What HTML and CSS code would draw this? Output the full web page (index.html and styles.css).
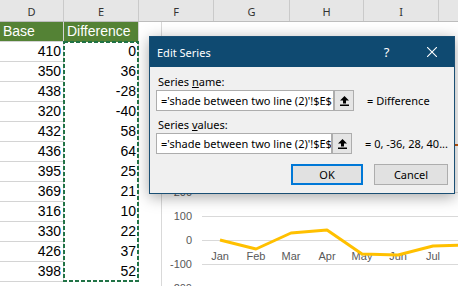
FILE: index.html
```html
<!DOCTYPE html>
<html lang="en">
<head>
    <meta charset="UTF-8">
    <meta name="viewport" content="width=device-width, initial-scale=1.0">
    <title>Edit Series</title>
    <link rel="stylesheet" href="styles.css">
</head>
<body>
    <div class="sheet">
        <div class="col-heads">
            <div class="col-head col-d">D</div>
            <div class="col-head col-e">E</div>
            <div class="col-head col-f">F</div>
            <div class="col-head col-g">G</div>
            <div class="col-head col-h">H</div>
            <div class="col-head col-i">I</div>
            <div class="col-head col-j"></div>
        </div>

        <div class="row">
            <div class="cell col-d title-cell">Base</div>
            <div class="cell col-e title-cell">Difference</div>
        </div>
        <div class="row"><div class="cell col-d">410</div><div class="cell col-e">0</div></div>
        <div class="row"><div class="cell col-d">350</div><div class="cell col-e">36</div></div>
        <div class="row"><div class="cell col-d">438</div><div class="cell col-e">-28</div></div>
        <div class="row"><div class="cell col-d">320</div><div class="cell col-e">-40</div></div>
        <div class="row"><div class="cell col-d">432</div><div class="cell col-e">58</div></div>
        <div class="row"><div class="cell col-d">436</div><div class="cell col-e">64</div></div>
        <div class="row"><div class="cell col-d">395</div><div class="cell col-e">25</div></div>
        <div class="row"><div class="cell col-d">369</div><div class="cell col-e">21</div></div>
        <div class="row"><div class="cell col-d">316</div><div class="cell col-e">10</div></div>
        <div class="row"><div class="cell col-d">330</div><div class="cell col-e">22</div></div>
        <div class="row"><div class="cell col-d">426</div><div class="cell col-e">37</div></div>
        <div class="row"><div class="cell col-d">398</div><div class="cell col-e">52</div></div>

        <!-- copy marquee around E2:E13 -->
        <svg class="marquee" width="76" height="241">
            <rect x="1" y="1" width="74" height="239" fill="none" stroke="#217346" stroke-width="2" stroke-dasharray="4 2"/>
        </svg>

        <!-- chart sitting on the sheet, drawn in page coordinates -->
        <div class="chart">
            <svg width="319" height="264" viewBox="139 22 319 264">
                <line class="axis" x1="161.5" y1="22" x2="161.5" y2="286"/>
                <line class="grid" x1="202" y1="192.5" x2="458" y2="192.5"/>
                <line class="grid" x1="202" y1="216.5" x2="458" y2="216.5"/>
                <line class="grid" x1="202" y1="240.5" x2="458" y2="240.5"/>
                <line class="grid" x1="202" y1="264.5" x2="458" y2="264.5"/>
                <text class="tick" x="192" y="196" text-anchor="end">200</text>
                <text class="tick" x="192" y="220" text-anchor="end">100</text>
                <text class="tick" x="192" y="244" text-anchor="end">0</text>
                <text class="tick" x="192" y="268" text-anchor="end">-100</text>
                <text class="tick" x="192" y="292" text-anchor="end">-200</text>
                <text class="tick" x="220" y="260" text-anchor="middle">Jan</text>
                <text class="tick" x="256" y="260" text-anchor="middle">Feb</text>
                <text class="tick" x="291" y="260" text-anchor="middle">Mar</text>
                <text class="tick" x="327" y="260" text-anchor="middle">Apr</text>
                <text class="tick" x="362" y="260" text-anchor="middle">May</text>
                <text class="tick" x="398" y="260" text-anchor="middle">Jun</text>
                <text class="tick" x="433" y="260" text-anchor="middle">Jul</text>
                <line x1="452" y1="145" x2="458" y2="145" stroke="#c55a11" stroke-width="2"/>
                <polyline class="series" points="220,240 256,249 291,233 327,230 362,254 398,255 433,246 469,245"/>
            </svg>
        </div>
    </div>

    <div class="dialog">
        <div class="dialog-title">
            <span class="dialog-name">Edit Series</span>
            <span class="title-btn">?</span>
            <span class="title-btn">
                <svg width="10" height="10" viewBox="0 0 10 10">
                    <path d="M0 0 L10 10 M10 0 L0 10" stroke="#fff" stroke-width="1.1"/>
                </svg>
            </span>
        </div>
        <div class="dialog-body">
            <div class="field">
                <div class="field-label">Series <u>n</u>ame:</div>
                <div class="field-row">
                    <div class="ref-input">='shade between two line (2)'!$E$1</div>
                    <div class="ref-btn">
                        <svg width="9" height="10" viewBox="0 0 9 10">
                            <path d="M4.5 0 L9 4.5 H6 V7.5 H3 V4.5 H0 Z" fill="#000"/>
                            <rect x="0" y="8.5" width="9" height="1.5" fill="#000"/>
                        </svg>
                    </div>
                    <div class="ref-result">= Difference</div>
                </div>
            </div>
            <div class="field">
                <div class="field-label">Series <u>v</u>alues:</div>
                <div class="field-row">
                    <div class="ref-input">='shade between two line (2)'!$E$2:$E$13</div>
                    <div class="ref-btn">
                        <svg width="9" height="10" viewBox="0 0 9 10">
                            <path d="M4.5 0 L9 4.5 H6 V7.5 H3 V4.5 H0 Z" fill="#000"/>
                            <rect x="0" y="8.5" width="9" height="1.5" fill="#000"/>
                        </svg>
                    </div>
                    <div class="ref-result">= 0, -36, 28, 40...</div>
                </div>
            </div>
            <div class="dialog-buttons">
                <div class="btn btn-ok">OK</div>
                <div class="btn btn-cancel">Cancel</div>
            </div>
        </div>
    </div>
</body>
</html>
```

FILE: styles.css
```css
body {
    margin: 0;
    width: 458px;
    height: 286px;
    overflow: hidden;
    position: relative;
    background: #fff;
    font-family: "Liberation Sans", Arial, sans-serif;
}
.sheet {
    position: relative;
    height: 100%;
}
.col-heads {
    display: flex;
    height: 22px;
    box-sizing: border-box;
    background: #e6e6e6;
    border-bottom: 1px solid #bdbdbd;
}
.col-head {
    box-sizing: border-box;
    height: 100%;
    padding-top: 2px;
    border-right: 1px solid #cacaca;
    display: flex;
    align-items: center;
    justify-content: center;
    font-family: "Noto Sans", sans-serif;
    font-size: 11px;
    color: #333;
}
.col-d { width: 64px; }
.col-e { width: 75px; }
.col-f { width: 75px; }
.col-g { width: 76px; }
.col-h { width: 74px; }
.col-i { width: 75px; }
.col-j { flex: 1; border-right: none; }
.row {
    display: flex;
    height: 20px;
}
.cell {
    box-sizing: border-box;
    height: 20px;
    line-height: 19px;
    font-size: 14px;
    color: #000;
    text-align: right;
    padding-right: 2px;
}
.cell.col-d {
    border-right: 1px solid #d4d4d4;
    border-bottom: 1px solid #d4d4d4;
}
.cell.col-e {
    border-right: 1px solid #d4d4d4;
}
.title-cell {
    background: #548235;
    color: #fff;
    text-align: left;
    padding-left: 3px;
}
.marquee {
    position: absolute;
    left: 63px;
    top: 41px;
}
.chart {
    position: absolute;
    left: 139px;
    top: 22px;
    width: 319px;
    height: 264px;
    background: #fff;
}
.chart svg {
    display: block;
}
.axis, .grid {
    stroke: #d9d9d9;
    stroke-width: 1;
}
.tick {
    font-family: "Liberation Sans", Arial, sans-serif;
    font-size: 11px;
    fill: #595959;
}
.series {
    fill: none;
    stroke: #ffc000;
    stroke-width: 3;
    stroke-linejoin: round;
}
.dialog {
    position: absolute;
    left: 149px;
    top: 36px;
    width: 306px;
    box-sizing: border-box;
    border: 1px solid #1a4f74;
    background: #f0f0f0;
    box-shadow: 0 3px 14px rgba(0, 0, 0, 0.35);
    font-family: "Noto Sans", sans-serif;
    font-size: 11px;
    color: #000;
}
.dialog-title {
    display: flex;
    align-items: center;
    height: 30px;
    background: #0f4a71;
    color: #fff;
}
.dialog-name {
    flex: 1;
    padding-left: 7px;
}
.title-btn {
    width: 45px;
    height: 30px;
    display: flex;
    align-items: center;
    justify-content: center;
    font-size: 13px;
}
.dialog-body {
    padding: 7px 6px 8px 6px;
}
.field + .field {
    margin-top: 6px;
}
.field-label {
    line-height: 15px;
    margin-bottom: 1px;
    padding-left: 2px;
}
.field-row {
    display: flex;
    align-items: center;
}
.ref-input {
    width: 178px;
    height: 21px;
    box-sizing: border-box;
    border: 1px solid #adadad;
    background: #fff;
    padding: 0 4px;
    line-height: 19px;
    white-space: nowrap;
    overflow: hidden;
}
.ref-btn {
    width: 20px;
    height: 21px;
    box-sizing: border-box;
    border: 1px solid #adadad;
    background: #e5e5e5;
    display: flex;
    align-items: center;
    justify-content: center;
}
.ref-result {
    margin-left: 13px;
    white-space: nowrap;
}
.dialog-buttons {
    display: flex;
    justify-content: flex-end;
    gap: 11px;
    margin-top: 10px;
}
.btn {
    height: 21px;
    box-sizing: border-box;
    border: 1px solid #adadad;
    background: #e1e1e1;
    display: flex;
    align-items: center;
    justify-content: center;
}
.btn-ok {
    width: 72px;
    border: 2px solid #0078d7;
}
.btn-cancel {
    width: 74px;
}
```
